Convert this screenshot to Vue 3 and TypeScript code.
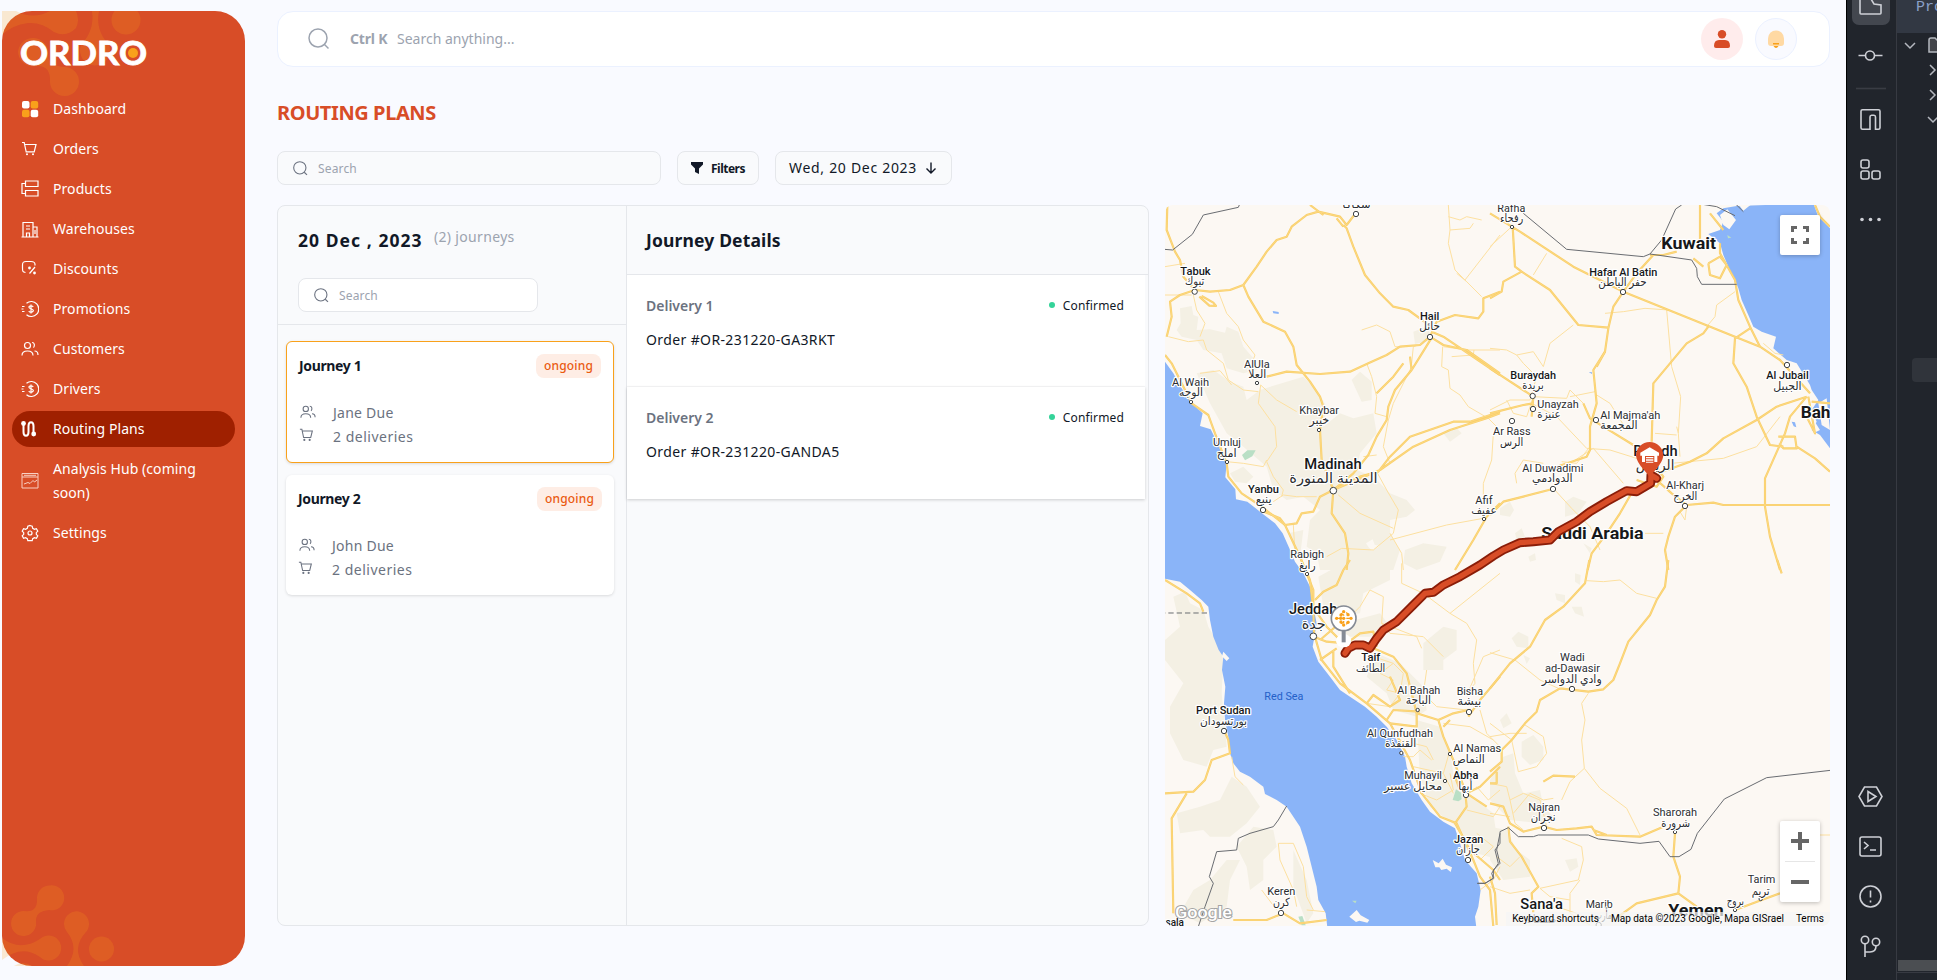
<script setup lang="ts">
interface NavItem { label: string; icon: string; active?: boolean }
interface Label { t: string; x: number; w: number; y: number; s: number; b?: boolean; c?: string }
interface Tile {
  x: number; y: number
  terrain: string[]; water: string[]; land: string[]; park: string[]
  minor: string[]; major: string[]; border: string[]
  labels: Label[]; towns: [number, number, number][]
}

const nav: NavItem[] = [
  { label: 'Dashboard', icon: 'dash' },
  { label: 'Orders', icon: 'cart' },
  { label: 'Products', icon: 'products' },
  { label: 'Warehouses', icon: 'warehouse' },
  { label: 'Discounts', icon: 'discount' },
  { label: 'Promotions', icon: 'coin' },
  { label: 'Customers', icon: 'users' },
  { label: 'Drivers', icon: 'coin' },
  { label: 'Routing Plans', icon: 'route', active: true },
  { label: 'Analysis Hub (coming soon)', icon: 'chart' },
  { label: 'Settings', icon: 'gear' },
]

const icons: Record<string, string> = {
  cart: 'M1 2.5h2.2l2 9.3h8l1.8-7.3H4',
  products: 'M4.5 1h12.5v5.5h-12.5zM4.5 10.500h12.5v5.5h-12.5zM4.5 3.500H1v10h3.500',
  warehouse: 'M2 17V2.500h10V17M12 7h4v10M.5 17h17M5 6h4M5 9h4M5.500 17v-4h3v4M14 10v4',
  discount: 'M4.500 12.500C1.500 12 1.500 11 1.500 8V5C1.500 2 2.500 1.500 5 1.500h5c2.500 0 4 .5 4 3v1M14 7l-5.500 6.500',
  coin: 'M5.500 3.200A7.500 7.500 0 1 1 5.500 14.800M1 6.500h2.500M.5 9h2M1 11.500h2.500M12.200 7C11.500 5.300 7.700 5.400 8 7.400c.3 1.700 4 1 4.300 3 .2 2-3.600 2.300-4.500.5M10 4.500v9',
  users: 'M6.500 8.500a3 3 0 1 0 0-6 3 3 0 0 0 0 6zM1 15.500c0-3 1.500-4.500 5.500-4.500s5.500 1.500 5.500 4.500M11 2.500c2.700 0 3 3.500 1.500 5.200M13.500 11c2.300 0 3.500 1.500 3.500 4',
  route: 'M2.500 4v8c0 5 5 5 5 0V6c0-5 5-5 5 0v7',
  chart: 'M1 1.500h16v14.500H1zM1 5h16M3 3.300h12M3 12l4-1.500 2 1 3-3 1.500 1.500L16 8',
  gear: 'M9 1.500l2.200.8.5 2 1.700 1 2-.6 1.400 2.500-1.500 1.500v1.600l1.500 1.500-1.400 2.500-2-.6-1.700 1-.5 2H6.800l-.5-2-1.700-1-2 .6-1.400-2.500 1.500-1.500V8.700L1.200 7.200l1.400-2.500 2 .6 1.700-1 .5-2zM9 11a2 2 0 1 0 0-4 2 2 0 0 0 0 4z',
}

const journeys = [
  { name: 'Journey 1', status: 'ongoing', driver: 'Jane Due', count: '2 deliveries', selected: true },
  { name: 'Journey 2', status: 'ongoing', driver: 'John Due', count: '2 deliveries', selected: false },
]
const deliveries = [
  { name: 'Delivery 1', order: 'Order #OR-231220-GA3RKT', status: 'Confirmed' },
  { name: 'Delivery 2', order: 'Order #OR-231220-GANDA5', status: 'Confirmed' },
]

/* Each tile is drawn at three times its on-screen size. */
const tiles: Tile[] = [
  {
    x: 1160, y: 200,
    terrain: [
      'M60 325L95 318 100 345 115 350 110 390 150 388 195 398 200 380 235 395 250 440 285 480 290 510 250 520 200 505 185 460 130 450 110 420 65 410 50 390 62 370z',
      'M110 520L160 510 210 545 250 560 260 600 300 570 380 545 430 530 470 570 500 620 490 680 540 640 580 655 640 640 650 700 600 760 590 810 640 830 690 880 740 900 765 930 740 950 690 960 690 1000 720 1050 700 1110 480 1110 470 1060 440 1040 450 960 480 930 430 890 380 900 340 870 320 800 250 740 200 700 150 610z',
      'M575 540L600 515 635 545 635 600 605 605zM760 395L800 380 820 420 765 432zM735 1050L790 1030 860 1040 840 1085 770 1110 730 1090zM850 700L890 685 905 700 870 725z',
      'M210 820L250 800 280 830 260 850 225 845zM385 1000L430 990 420 1070 400 1040z',
    ],
    water: [
      'M0 475L15 485 40 520 62 560 95 610 128 640 120 678 152 688 168 720 182 752 200 790 196 832 226 868 228 898 262 905 300 935 345 970 368 1000 388 1045 405 1085 430 1120 450 1160 462 1230 470 1270 458 1340 475 1385 510 1430 540 1470 570 1490 615 1520 650 1550 680 1580 710 1620 735 1670 740 1700 755 1750 785 1800 810 1835 850 1865 885 1885 900 1930 915 1980 950 2020 962 2070 955 2120 945 2150 950 2190 503 2190 497 2140 475 2100 470 2060 455 2000 440 1940 420 1880 380 1820 350 1800 315 1782 310 1760 270 1730 240 1715 220 1690 210 1660 205 1610 195 1560 192 1510 196 1460 186 1410 190 1370 176 1350 160 1310 150 1260 145 1220 125 1200 90 1170 60 1145 0 1133z',
      'M338 333l18 3v6l-16-2z',
    ],
    land: ['M618 1030l20-12 6 16 14 4-22 14-10-10z'],
    park: ['M246 765l16-14 25 0-10 18-22 12z'],
    minor: [
      'M15 200L45 195 75 190M15 285H95M100 285L110 330 135 370 120 410M25 410L85 425 130 420 140 450 190 490 205 540 250 570 295 575M175 275L200 340 235 380 250 420 285 465 265 520',
      'M302 555L295 610 345 680 350 740 320 785 340 830 370 870 365 890M120 520L180 512 215 555M200 785L250 790 310 800M302 555L350 600 410 635M310 800L320 780',
      'M865 15L870 90 865 130 885 210 920 245 965 290M870 90L930 85 940 70M915 240L1020 105M865 50L900 60 920 50 965 60',
      'M605 390L650 375 690 395 705 440 725 440M850 440L920 450H1020M848 440L845 500 865 510 870 565 900 585 925 620 985 655 1020 690M875 470L940 465 942 450M1000 700L995 780 970 850 970 890',
      'M620 490L635 530 650 590 645 640 680 650M755 490L760 440 790 430M755 500L700 610 685 660 670 740 690 790M650 815L680 870 715 930 700 1000 640 1050 545 1045 500 1070M690 1000L725 1060 730 1110M690 1020L860 975 970 955M535 885L600 940 700 985M610 770L650 765',
      'M340 905L370 885 410 890 470 890M400 975L405 1060M890 220L920 245',
    ],
    major: [
      'M22 15L20 90 45 155 60 180 70 230 105 270 60 285 30 305 35 350 20 410M105 270L150 275 210 270 250 255 290 200 320 155 350 120 380 110 395 80 440 45 475 35 540 50 560 75 585 42M450 15L490 45M250 255L265 290 310 365 375 395 400 440 410 495 450 545 480 590 490 620 480 690 485 780 520 870',
      'M118 290L148 317 168 318 160 308 125 288M550 75L560 85 580 140 615 225 660 280 700 320 745 330 800 370M530 55L550 80M810 410L830 365 885 345 955 355 970 335 970 295 1020 275M810 410L780 435 720 440 680 465 625 490 570 515 480 522 380 515 320 530M810 410L850 435 920 450 1020 520M815 395L850 410 1020 525',
      'M812 418L780 470 755 510 705 570 685 620 680 660 650 710 625 765 580 820 520 870M755 510L750 470M730 490L700 530 650 580M520 870L600 830 655 815 690 770 750 710 880 665 930 665 1020 635M520 870L660 810 760 740 870 690 980 655 1020 640M520 870L480 890 460 935 425 940 410 970 375 975 360 955 300 930',
      'M520 870L515 940 555 1000 565 1060 560 1110M15 465L35 490 60 540 95 610 145 645 165 700 200 790 205 830 245 880 305 920 375 975 420 1070 460 1170 460 1230M1020 910L980 950 940 1020 885 1110',
    ],
    border: ['M0 147L38 150 97 103 130 45 235 22 240 10'],
    labels: [
      { t: 'سكاكا', x: 547, w: 85, y: 24, s: 34 },
      { t: 'Tabuk', x: 61, w: 91, y: 224, s: 31, b: true }, { t: 'تبوك', x: 75, w: 58, y: 255, s: 34 },
      { t: 'Hail', x: 780, w: 58, y: 360, s: 31, b: true }, { t: 'حائل', x: 778, w: 62, y: 390, s: 34 },
      { t: 'AlUla', x: 252, w: 77, y: 503, s: 31 }, { t: 'العلا', x: 265, w: 54, y: 534, s: 34 },
      { t: 'Al Wajh', x: 36, w: 111, y: 557, s: 31 }, { t: 'الوجه', x: 57, w: 72, y: 588, s: 34 },
      { t: 'Khaybar', x: 418, w: 119, y: 641, s: 31 }, { t: 'خيبر', x: 448, w: 60, y: 672, s: 34 },
      { t: 'Umluj', x: 159, w: 84, y: 737, s: 31 }, { t: 'املج', x: 170, w: 60, y: 770, s: 34 },
      { t: 'Madinah', x: 433, w: 172, y: 808, s: 44, b: true }, { t: 'المدينة المنورة', x: 388, w: 265, y: 850, s: 43 },
      { t: 'Yanbu', x: 264, w: 93, y: 878, s: 31, b: true }, { t: 'ينبع', x: 287, w: 48, y: 910, s: 34 },
      { t: 'Afif', x: 946, w: 52, y: 911, s: 31 }, { t: 'عفيف', x: 934, w: 76, y: 942, s: 34 },
      { t: 'Rabigh', x: 391, w: 101, y: 1073, s: 31 },
    ],
    towns: [[588, 42, 8], [104, 275, 8], [810, 411, 8], [291, 549, 5], [93, 606, 5], [477, 690, 5], [201, 786, 5], [520, 872, 10], [309, 930, 8], [972, 957, 5]],
  },
  {
    x: 1490, y: 200,
    terrain: ['M30 925L60 905 72 930 60 950 30 945zM225 905L250 890 290 905 265 940 225 950zM75 1000L95 985 105 1010 80 1018zM280 1030L305 1045 300 1060zM115 1070L135 1060 138 1080 120 1085z'],
    water: [
      'M680 40L700 25 740 18 970 10 985 50 1020 85V745L990 705 965 690 980 665 965 630 985 600 965 570 960 555 945 530 920 490 890 480 850 445 858 410 815 395 790 380 775 345 755 300 745 265 735 240 715 200 700 165 690 130 655 102 690 90 700 65z',
      'M905 665l10 2 4 15-8-3zM296 516l10 1 0 5z',
    ],
    land: ['M690 45L712 28 738 60 718 88 700 75zM985 610L1010 595 1020 690 995 675zM965 650L990 690 970 700z', 'M735 0L800 0 760 32z'],
    park: ['M712 105l12 8-10 2z'],
    minor: [
      'M0 140L65 80M170 160L130 225M0 445L50 450 80 465 130 455 160 500 180 430 250 375M345 340L400 335 465 325 535 330M530 330L545 500 572 590 565 700 570 770M735 275L680 315 675 350 650 380M820 430L855 460 880 465',
      'M0 630L60 600 120 600 140 530 100 490 80 465M130 590L110 650 70 640 50 600M130 590L230 595 240 570 280 610M240 590L315 575M300 740L260 790 215 785M495 700L560 705M125 610L200 650 290 745 360 750 440 775M80 850L75 820 100 780 160 790M190 865L245 925 300 980 330 1050M545 790L700 775 800 740 870 650M590 920L585 960 570 935M465 1000H520',
      'M240 790L310 745 400 850M320 585L360 610 410 690M565 700L560 680',
    ],
    major: [
      'M0 40L90 95 250 200 400 275 560 340 735 410 810 440 870 480 960 580M68 80L75 200 95 215 40 245 35 275 0 295M95 215L180 270 265 375 355 383M490 165L440 220 400 275 370 320 355 385 345 455 310 510 320 610 300 680 300 750 290 770 200 800',
      'M345 455L320 500M485 725L490 550 540 490 590 430 640 400 655 380M630 15V120M660 40L700 90M690 130L690 160 735 240 745 300 780 380 810 440M655 190L660 225 690 235 710 195 690 170 655 190M610 175L640 200M780 385L735 415 730 490 770 560 800 650 840 735 880 740',
      'M480 165H520L560 155M0 505L130 590 125 650M0 640L100 615 130 610M280 610L300 655 340 680 430 735 490 770M490 825L600 785 650 760 700 715 800 660 860 620 950 590M950 590L900 650 885 700 865 745 825 835 825 920 840 1010 870 1110M865 710L915 710 920 745 880 745 868 730M920 740L975 775 1020 815M955 590L975 700 950 650',
      'M500 840L545 880 590 915 670 908 700 915H1020M585 920L555 950 535 1010 525 1050 535 1110M430 870L390 940 350 1000 305 1060 293 1110M188 867L100 890 40 905 0 945M440 840L500 860 520 830 490 790M975 15L990 50 1020 80M965 605L1020 610',
    ],
    border: ['M100 40L230 148 460 170 480 162 605 180 620 205 622 230 635 253H740', 'M480 162L515 120 557 27 575 15', 'M632 12L680 20 735 47M735 10L760 35'],
    labels: [
      { t: 'Rafha', x: 22, w: 84, y: 35, s: 31 }, { t: 'رفحاء', x: 30, w: 70, y: 67, s: 34 },
      { t: 'Kuwait', x: 514, w: 164, y: 148, s: 52, b: true },
      { t: 'Hafar Al Batin', x: 298, w: 204, y: 227, s: 31, b: true }, { t: 'حفر الباطن', x: 325, w: 145, y: 258, s: 34 },
      { t: 'Buraydah', x: 61, w: 137, y: 536, s: 31, b: true }, { t: 'بريدة', x: 97, w: 64, y: 568, s: 34 },
      { t: 'Unayzah', x: 142, w: 124, y: 623, s: 31 }, { t: 'عنيزة', x: 142, w: 70, y: 655, s: 34 },
      { t: 'Al Jubail', x: 829, w: 127, y: 536, s: 31, b: true }, { t: 'الجبيل', x: 850, w: 85, y: 570, s: 34 },
      { t: "Al Majma'ah", x: 331, w: 180, y: 656, s: 31 }, { t: 'المجمعة', x: 331, w: 112, y: 688, s: 34 },
      { t: 'Bahrain', x: 932, w: 178, y: 654, s: 50, b: true },
      { t: 'Ar Rass', x: 9, w: 113, y: 704, s: 31 }, { t: 'الرس', x: 30, w: 70, y: 738, s: 34 },
      { t: 'Riyadh', x: 430, w: 133, y: 768, s: 44, b: true }, { t: 'الرياض', x: 437, w: 116, y: 810, s: 43 },
      { t: 'Al Duwadimi', x: 97, w: 183, y: 815, s: 31 }, { t: 'الدوادمي', x: 126, w: 122, y: 847, s: 34 },
      { t: 'Al-Kharj', x: 529, w: 113, y: 868, s: 31 }, { t: 'الخرج', x: 550, w: 72, y: 901, s: 34 },
      { t: 'Saudi Arabia', x: 154, w: 307, y: 1018, s: 52, b: true },
    ],
    towns: [[66, 81, 5], [399, 276, 8], [128, 588, 8], [129, 627, 8], [66, 663, 8], [318, 660, 8], [891, 495, 8], [189, 867, 8], [585, 918, 8]],
  },
  {
    x: 1160, y: 560,
    terrain: [
      'M40 110L75 95 90 130 130 150 145 200 180 260 190 300 185 400 195 500 200 560 160 570 140 620 70 600 30 520 30 440 70 370 15 300 15 240 60 200z',
      'M50 760L120 740 180 720 215 650 260 680 300 740 260 790 210 830 150 830 130 810 60 820zM230 860L280 800 340 810 350 860 310 900 310 960 270 990 260 920zM150 960L200 900 240 900 210 960 200 1040 120 1090 60 1060 100 990zM400 870L440 960 460 1060 440 1090 400 980z',
      'M475 50L550 10 600 0 690 0 690 60 610 100 600 160 520 170 490 140zM550 190L660 160 690 200 630 230 560 230zM650 280L720 310 790 380 800 450 770 470 700 450 680 400 620 350zM770 480L840 500 870 570 880 640 920 700 1000 760 1020 900 950 880 890 800 810 740 780 650z',
      'M790 250L850 200 890 210 890 270 850 300 850 330 790 330z',
    ],
    water: [],
    land: ['M818 900l18 10 12-14 10 18 18 8-4 14-12-10-16 4-6-8-12 0zM568 1070l22-20 12 16 26 14-6 8-24-6-10 4zM190 275l18 20-8 8-14-14z'],
    park: ['M878 720l10-32 15 10 2 20-10 6zM415 1070l12-2 10 28-12 0zM576 1022l14 0-4 8z'],
    minor: [
      'M725 10V70L790 100 870 160 1020 40M870 160L920 190 950 240 940 310 945 370 925 395M600 140L630 90 670 110 665 190 770 230M600 140L560 180M665 190L690 220 790 230 850 290M770 230L785 265',
      'M640 290L700 310 660 340 700 360 680 390 720 400 690 440 620 430M700 310L730 340 720 400M850 490L930 500 1000 540M960 450L980 520 1020 560M690 490L720 540 800 560 820 600M730 590L760 590 780 570 815 600M925 395L970 290 1020 270',
      'M355 850L360 900 400 990 410 1040M355 850L400 850 430 920 440 1010 460 1050M305 990L350 1050M215 590L225 650 250 675M440 1050L495 1055M950 820L1000 860 960 900M960 990L1000 960 1020 920M950 680L985 720 1020 690M780 700L830 720 880 690 870 640M920 750L1000 770 1020 740',
      'M800 330L790 400 830 440 920 450M870 570L850 640 880 700M760 620L850 640',
    ],
    major: [
      'M15 60L80 100 120 130 130 155M192 510L205 540 210 580 155 600 135 660 100 695 15 700M80 700L35 775 40 1060M415 -20L450 60 460 150 462 220 485 300 540 370 620 430 690 490 750 600 785 700 840 770 890 790 940 900 960 950 990 990 1000 1100',
      'M465 120L490 95 530 75 550 30 570 0M465 150L500 200 540 240 640 265 700 290 740 340 770 460 835 480 850 530 880 600 915 690 920 740 885 790 930 870M462 230L500 245 560 250 600 220 640 215 650 260M480 300L530 265M520 270L520 320 570 400M480 240L550 180',
      'M620 430L640 405 690 440 720 420 690 350M680 480L700 450 780 455M770 460L770 500 690 490M835 480L880 460 925 450M925 470L960 420 1020 350M885 650L900 690M920 700L960 680 1020 620M920 700L980 740M930 870L1000 930 1020 960M850 500L870 480M220 1080L320 1080 370 1060 420 1090 500 1080',
    ],
    border: ['M380 738L355 780 340 800 270 820 235 835 230 870 170 875 148 950 160 970 135 1040 115 1100', 'M1020 820L1010 870 1020 910 1000 930 1000 955 975 970H952'],
    labels: [
      { t: 'رابغ', x: 417, w: 50, y: 27, s: 34 },
      { t: 'Jeddah', x: 387, w: 145, y: 163, s: 44, b: true }, { t: 'جدة', x: 425, w: 72, y: 206, s: 43 },
      { t: 'Taif', x: 604, w: 57, y: 304, s: 31, b: true }, { t: 'الطائف', x: 588, w: 88, y: 336, s: 34 },
      { t: 'Al Bahah', x: 712, w: 129, y: 401, s: 31 }, { t: 'الباحة', x: 737, w: 76, y: 433, s: 34 },
      { t: 'Bisha', x: 890, w: 79, y: 404, s: 31 }, { t: 'بيشة', x: 892, w: 72, y: 435, s: 34 },
      { t: 'Red Sea', x: 313, w: 117, y: 421, s: 31, c: '#2c68d0' },
      { t: 'Port Sudan', x: 108, w: 164, y: 461, s: 31, b: true }, { t: 'بورتسودان', x: 120, w: 141, y: 494, s: 34 },
      { t: 'Al Qunfudhah', x: 621, w: 198, y: 530, s: 31 }, { t: 'القنفذة', x: 675, w: 94, y: 562, s: 34 },
      { t: 'Al Namas', x: 880, w: 144, y: 575, s: 31 }, { t: 'النماص', x: 878, w: 96, y: 608, s: 34 },
      { t: 'Muhayil', x: 733, w: 113, y: 656, s: 31 }, { t: 'محايل عسير', x: 672, w: 174, y: 690, s: 34 },
      { t: 'Abha', x: 879, w: 76, y: 656, s: 31, b: true }, { t: 'أبها', x: 895, w: 42, y: 690, s: 34 },
      { t: 'Jazan', x: 882, w: 88, y: 848, s: 31, b: true }, { t: 'جازان', x: 888, w: 72, y: 880, s: 34 },
      { t: 'Keren', x: 322, w: 84, y: 1006, s: 31 }, { t: 'كرن', x: 339, w: 50, y: 1038, s: 34 },
      { t: 'Kassala', x: -34, w: 106, y: 1097, s: 31, b: true },
    ],
    towns: [[441, 42, 5], [460, 229, 10], [773, 450, 5], [927, 456, 8], [192, 513, 8], [724, 579, 5], [870, 582, 5], [855, 663, 5], [918, 705, 8], [924, 900, 8], [363, 1059, 8]],
  },
  {
    x: 1490, y: 560,
    terrain: [
      'M65 235L85 215 115 230 115 265 80 260zM245 140L275 140 282 170 255 160zM195 100L225 105 225 130 200 120zM255 40L272 45 270 75 255 65zM100 285L120 295 110 312zM30 480L50 460 65 490 40 505z',
      'M95 545L130 525 160 560 160 600 120 615 95 590zM40 590L70 580 75 640 100 700 150 690 160 740 200 780 150 790 60 780 0 720 0 660zM0 800L50 810 80 870 120 900 120 950 40 960 0 900zM225 900L260 895 265 920 240 935z',
    ],
    water: [], land: [], park: [],
    minor: [
      'M290 62L340 65 390 60 440 100 500 115M0 278L75 300 150 360 205 385M295 400L275 430 285 480 275 540 283 625 240 665 215 720M283 625L330 685 410 745 450 825M105 495L160 530 170 580 140 620 85 635 65 540 0 490M0 530L60 520 110 520',
      'M0 670L50 680 60 720 100 700 150 720 170 800M215 835L275 860 280 900 265 960 150 985M0 980L60 1000 120 990M60 720L75 790 100 810M90 890L60 920 20 890M270 960L240 1000 240 1060 300 1095M150 985L180 1010 240 1020M990 825H1020',
      'M70 760L120 700 160 720 190 715M0 760L60 770M130 1050L200 1040 260 1060',
    ],
    major: [
      'M298 0L285 70 220 140 165 180 120 260 60 310 0 385M535 0L525 80 500 120 480 165 415 245 390 310 370 360 340 388 295 395 210 385 150 420 140 455 105 490 65 540 35 570 35 605 0 635M862 0L875 40M20 635V670L0 670',
      'M0 730L40 740 60 790 100 815 160 800 200 810 260 805 305 800 320 825 450 830 520 800M310 810L350 825M555 820L550 890 570 950 565 1000 440 1030 385 1070M565 1000L620 1040M255 650L190 647 160 665M55 800L60 845 95 890 145 980 125 1000 130 1060M0 950L15 1000 20 1095M735 1050L815 1020 870 1000',
    ],
    border: ['M-38 970H-15L10 955 5 940 25 910 15 870 30 850 30 815 55 803 85 830H130L145 825H295L325 837 450 850 507 844 540 890H567L603 868 622 820 703 717 830 653 1030 630'],
    labels: [
      { t: 'Wadi', x: 210, w: 74, y: 302, s: 31 }, { t: 'ad-Dawasir', x: 165, w: 165, y: 335, s: 31 }, { t: 'وادي الدواسر', x: 155, w: 180, y: 368, s: 34 },
      { t: 'Najran', x: 115, w: 95, y: 752, s: 31 }, { t: 'نجران', x: 122, w: 75, y: 784, s: 34 },
      { t: 'Sharorah', x: 489, w: 132, y: 767, s: 31 }, { t: 'شرورة', x: 514, w: 86, y: 800, s: 34 },
      { t: 'Tarim', x: 773, w: 83, y: 970, s: 31 }, { t: 'تريم', x: 785, w: 54, y: 1004, s: 34 },
      { t: 'بروج', x: 710, w: 52, y: 1036, s: 34 },
      { t: "Sana'a", x: 91, w: 128, y: 1047, s: 44, b: true }, { t: 'Marib', x: 287, w: 81, y: 1045, s: 31 }, { t: 'صنعاء', x: 110, w: 90, y: 1088, s: 34 }, { t: 'مأرب', x: 315, w: 50, y: 1078, s: 34 },
      { t: 'Yemen', x: 535, w: 166, y: 1067, s: 52, b: true },
    ],
    towns: [[246, 387, 8], [162, 804, 8], [555, 816, 5], [812, 1017, 5], [735, 1050, 5], [326, 1095, 8]],
  },
]
const route = 'M1490 835L1473 825 1472 850 1430 875 1400 872 1340 905 1290 935 1250 965 1195 995 1170 1020 1120 1025 1080 1028 1030 1050 1000 1068 960 1095 900 1130 850 1155 820 1177 795 1180 760 1215 710 1265 670 1290 650 1315 630 1345 610 1335 585 1335 565 1345 555 1360'
const fills = ['terrain', 'water', 'land', 'park'] as const
const lines = ['minor', 'major', 'border'] as const
const place = (t: Tile) => `translate(${t.x} ${t.y}) scale(.33333)`
</script>

<template>
  <div class="screen">
    <aside class="sidebar">
      <svg class="deco" width="243" height="955" viewBox="2 11 243 955">
        <path d="M2 11H16Q33 20 50 11H76Q80 20 76 28Q66 38 54 32Q42 22 28 23Q12 25 2 35z" />
        <path d="M92 11Q95 30 81 45A15 15 0 1 0 109 45Q95 30 99 11zM18 52A15 15 0 1 1 48 54Q48 66 64 67A14.500 14.500 0 1 1 50 82Q51 65 36 66A15 15 0 0 1 18 52z" />
        <circle cx="126" cy="20" r="14.500" />
        <path d="M49.500 885.500A12.500 12.500 0 1 1 49 910Q35 911 36 922A12.500 12.500 0 1 1 24 911Q38 913 37 898A12.500 12.500 0 0 1 49.500 885.500z" />
        <path d="M64 924A12.500 12.500 0 1 1 86 932Q71 948 84 966H67Q80 948 67 932A12.500 12.500 0 0 1 64 924zM2 938Q20 952 40 939A12.500 12.500 0 1 1 40 957Q22 944 2 960zM14 966Q23 960 32 966z" />
        <circle cx="101.500" cy="949" r="12.500" />
      </svg>
      <svg class="logo" width="136" height="40" viewBox="-3 -5 136 40">
        <text x="0" y="26.500" textLength="127" lengthAdjust="spacingAndGlyphs">ORDRO</text>
        <circle cx="113" cy="15" r="5" />
      </svg>
      <nav>
        <a v-for="n in nav" :key="n.label" class="item" :class="{ active: n.active }">
          <svg class="nico" width="18" height="18" viewBox="0 0 18 18">
            <template v-if="n.icon === 'dash'">
              <rect class="w" x="1" y="1" width="7.500" height="7.500" rx="2" /><rect class="o" x="9.700" y="1" width="7.500" height="7.500" rx="2" />
              <rect class="o" x="1" y="9.700" width="7.500" height="7.500" rx="2" /><rect class="w" x="9.700" y="9.700" width="7.500" height="7.500" rx="2" />
            </template>
            <path v-else class="ln" :class="n.icon" :d="icons[n.icon]" />
            <template v-if="n.icon === 'cart'"><circle class="w" cx="6" cy="14.300" r="1" /><circle class="w" cx="12" cy="14.300" r="1" /></template>
            <template v-if="n.icon === 'discount'"><circle class="w" cx="8.500" cy="8" r="1.400" /><circle class="w" cx="13.500" cy="13" r="1.400" /></template>
            <template v-if="n.icon === 'route'"><circle class="w" cx="2.500" cy="3.500" r="2.400" /><circle class="w" cx="12.700" cy="14" r="2.400" /></template>
          </svg>
          <span>{{ n.label }}</span>
        </a>
      </nav>
    </aside>

    <main>
      <header class="topbar">
        <svg class="mag" width="22" height="22" viewBox="0 0 22 22"><circle cx="10" cy="10" r="9" /><path d="M16.500 16.500L20.500 20.500" /></svg>
        <b>Ctrl K</b><span class="ph">Search anything...</span>
        <div class="round user"><svg width="18" height="18" viewBox="0 0 18 18"><circle cx="9" cy="4.200" r="4.200" /><path d="M1 16q0-6 5-6h6q5 0 5 6 0 2-2 2H3q-2 0-2-2z" /></svg></div>
        <div class="round bell"><svg width="18" height="18" viewBox="0 0 18 18"><path class="light" d="M1 8.500a8 8 0 0 1 16 0V13q0 3-3 3H4q-3 0-3-3z" /><path class="dark" d="M6 13h6v1.400H6zM6.500 16h5q-2.500 4-5 0z" /></svg></div>
      </header>
      <h1>ROUTING PLANS</h1>
      <div class="filters">
        <div class="field wide"><svg class="mag sm" width="15" height="15" viewBox="0 0 22 22"><circle cx="10" cy="10" r="9" /><path d="M16.500 16.500L20.500 20.500" /></svg>Search</div>
        <button class="btn f"><svg width="12" height="12" viewBox="0 0 12 12"><path d="M0 0h12v2.500L8 6.500V12L4 10V6.500L0 2.500z" /></svg>Filters</button>
        <button class="btn d">Wed, 20 Dec 2023<svg width="12" height="12" viewBox="0 0 12 12"><path d="M6 .5v10.500M1.500 6.500L6 11l4.500-4.500" /></svg></button>
      </div>
      <div class="content">
        <section class="panel">
          <div class="jcol">
            <div class="jhead">
              <div class="jtitle"><h2>20 Dec , 2023</h2><span>(2) journeys</span></div>
              <div class="field white"><svg class="mag sm" width="15" height="15" viewBox="0 0 22 22"><circle cx="10" cy="10" r="9" /><path d="M16.500 16.500L20.500 20.500" /></svg>Search</div>
            </div>
            <article v-for="j in journeys" :key="j.name" class="card" :class="{ sel: j.selected }">
              <div class="ctop"><h3>{{ j.name }}</h3><span class="badge">{{ j.status }}</span></div>
              <div class="crow"><svg width="16" height="16" viewBox="0 0 18 18"><path :d="icons.users" /></svg>{{ j.driver }}</div>
              <div class="crow wide-text"><svg width="16" height="16" viewBox="0 0 18 18"><path :d="icons.cart" /><circle cx="6" cy="14.500" r=".6" /><circle cx="12" cy="14.500" r=".6" /></svg>{{ j.count }}</div>
            </article>
          </div>
          <div class="dcol">
            <div class="dhead"><h2>Journey Details</h2></div>
            <article v-for="d in deliveries" :key="d.name" class="del">
              <div class="dtop"><h4>{{ d.name }}</h4><span class="state"><i></i>{{ d.status }}</span></div>
              <p>{{ d.order }}</p>
            </article>
          </div>
        </section>

        <section class="map">
          <svg width="665" height="721" viewBox="1165 205 665 721">
            <template v-for="k in fills" :key="k">
              <g v-for="t in tiles" :key="t.x + '-' + t.y" :transform="place(t)"><path v-for="d in t[k]" :key="d" :class="k" :d="d" /></g>
            </template>
            <template v-for="k in lines" :key="k">
              <g v-for="t in tiles" :key="t.x + '-' + t.y" :transform="place(t)">
                <path v-for="d in t[k]" :key="d" :class="k" :d="d" />
                <template v-if="k === 'major'"><path v-for="d in t[k]" :key="'c' + d" class="core" :d="d" /></template>
              </g>
            </template>
            <path class="border dash" transform="translate(1160 560) scale(.33333)" d="M0 159H148" />
            <g v-for="t in tiles" :key="'l' + t.x + '-' + t.y" :transform="place(t)">
              <circle v-for="(c, i) in t.towns" :key="i" class="town" :cx="c[0]" :cy="c[1]" :r="c[2]" />
              <text
                v-for="(l, i) in t.labels" :key="'t' + i" class="lbl" :class="{ bold: l.b, sea: l.c }" :x="l.x" :y="l.y"
                :font-size="l.s" :textLength="l.w" lengthAdjust="spacingAndGlyphs">{{ l.t }}</text>
            </g>
            <g transform="translate(1160 200) scale(.33333)">
              <path class="rout" :d="route" /><path class="rin" :d="route" />
              <g transform="translate(1428 724)">
                <path class="pin" d="M41 2A41 41 0 0 1 82 43Q80 62 58 86L41 106 24 86Q2 62 0 43A41 41 0 0 1 41 2z" />
                <path class="pw" d="M13 34L41 18 69 34V43H64V62H55V44H27V62H18V43H13zM30 47H52V51H30zM30 54H52V58H30zM30 61H52V64H30z" />
              </g>
              <g transform="translate(551 1255)">
                <ellipse class="base" cx="0" cy="67" rx="23" ry="20" /><path class="stem" d="M0 35V72" /><circle class="ball" r="37" />
                <path class="node" d="M-20 0H-8M8 0H22M0-8V-10L-8-15M0 8V12L-8 16M8-18L16-8M8 18L16 8" />
                <circle v-for="(p, i) in [[-21, 0], [0, -20], [-8, -10], [0, 20], [-8, 11], [13, -11], [13, 12], [22, 0], [0, 0], [-9, 0]]" :key="i" class="dot" :cx="p[0]" :cy="p[1]" r="5" />
              </g>
            </g>
            <text class="goog" x="1175" y="918" textLength="57" lengthAdjust="spacingAndGlyphs">Google</text>
          </svg>
          <div class="fs"><svg width="18" height="18" viewBox="0 0 18 18"><path d="M1.500 6V1.500H6M12 1.500h4.500V6M16.500 12v4.500H12M6 16.500H1.500V12" /></svg></div>
          <div class="zoom">
            <svg width="18" height="18" viewBox="0 0 18 18"><path d="M9 0v18M0 9h18" /></svg><hr>
            <svg width="18" height="18" viewBox="0 0 18 18"><path d="M0 9h18" /></svg>
          </div>
          <div class="attr"><span class="a1">Keyboard shortcuts</span><span class="a2">Map data ©2023 Google, Mapa GISrael</span><span class="a3">Terms</span></div>
        </section>
      </div>
    </main>

    <aside class="ide">
      <div class="rail">
        <div class="chip"></div>
        <svg width="49" height="980" viewBox="1847 0 49 980">
          <path d="M1860 0V13q0 1 1 1h19q1 0 1-1V5l-7-1-3-5" />
          <circle cx="1870" cy="55.500" r="4.500" /><path d="M1858.500 55.500h7M1874.500 55.500h8" />
          <path class="sep" d="M1856 88.500h30" />
          <path d="M1870 129.300h-7.500q-1.500 0-1.500-1.500v-16.500q0-1.500 1.500-1.500h16q1.500 0 1.500 1.500v16.500q0 1.500-1.500 1.500h-3V117q0-1.700-1.500-1.700h-2.500q-1.500 0-1.500 1.700z" />
          <rect x="1861" y="160" width="8" height="8" rx="2" /><rect x="1861" y="171" width="8" height="8" rx="2" /><rect x="1872" y="171" width="8" height="8" rx="2" />
          <g class="dots"><circle cx="1862" cy="219.500" r="1.800" /><circle cx="1870.500" cy="219.500" r="1.800" /><circle cx="1879" cy="219.500" r="1.800" /></g>
          <path d="M1864.500 787h12l5.500 9.500-5.500 9.500h-12l-5.500-9.500zM1868 791.500v10l8-5z" />
          <rect x="1860" y="837" width="21" height="19" rx="2" /><path d="M1864 842l4 3.500-4 3.500M1870 850h6" />
          <circle cx="1870.500" cy="896.500" r="10.500" /><path d="M1870.500 890.500v7M1870.500 900.500v2" />
          <circle cx="1865" cy="940" r="3.700" /><circle cx="1876" cy="942" r="3.700" /><path d="M1865 944v13M1865 952h5q6 0 6-6" />
        </svg>
      </div>
      <div class="tree">
        <div class="thead">Project</div>
        <svg width="40" height="100" viewBox="1897 33 40 100">
          <path d="M1905 43l5 5 5-5M1930 65l5 5-5 5M1930 90l5 5-5 5M1928 117l5 5 5-5" /><path class="fold" d="M1929 52V40q0-2 2-2h4l3 3v11z" />
        </svg>
        <div class="row"></div>
        <div class="bar"></div>
        <div class="foot"></div>
      </div>
    </aside>
  </div>
</template>

<style>
body { margin: 0; overflow: hidden; }
</style>

<style scoped>
* { box-sizing: border-box; }
.screen { width: 1937px; height: 980px; display: flex; background: #f9faff; font-family: "Noto Sans", "Open Sans", sans-serif; font-size: 14px; color: #111827; overflow: hidden; }
h1, h2, h3, h4, p { margin: 0; }
svg { display: block; flex: none; }
.sidebar { position: relative; width: 243px; height: 955px; margin: 11px 32px 0 2px; flex: none; border-radius: 30px; background: #d84d27; }
.deco { position: absolute; left: 0; top: 0; fill: #f9a11b; fill-opacity: .2; }
.logo { position: relative; margin: 22px 0 0 15px; fill: #fff; overflow: visible; }
.logo text { font: 700 32px Lato, sans-serif; stroke: #fff; stroke-width: .8; }
.logo circle { fill: #f9a11b; }
.sidebar { display: flex; flex-direction: column; }
nav { position: relative; display: flex; flex-direction: column; gap: 4px; padding: 18px 10px 0; }
.item { display: flex; align-items: center; min-height: 36px; padding: 6px 9px; gap: 14px; border-radius: 18px; color: #fff; line-height: 24px; font-size: 14px; letter-spacing: .07px; }
.item.active { background: #9f2000; }
.item span { width: 160px; }
.ln { fill: none; stroke: #fff; stroke-width: 1.200; }
.ln.route { stroke-width: 2; }
.ln.chart { stroke: #f9cfc2; stroke-width: 1; }
.w { fill: #fff; } .o { fill: #f9a11b; }
main { width: 1553px; flex: none; padding-top: 11px; }
.topbar { display: flex; align-items: center; height: 56px; border: 1px solid #ebf1ff; border-radius: 16px; background: #fff; padding: 0 32px 0 30px; color: #9ca3af; }
.topbar b { margin-left: 20px; font-weight: 700; width: 47px; letter-spacing: -.2px; padding-bottom: 2px; }
.ph { flex: 1; letter-spacing: 0; padding-bottom: 2px; }
.mag { fill: none; stroke: #9ca3af; stroke-width: 1.500; }
.mag.sm { stroke: #6b7280; stroke-width: 1.600; }
.round { width: 42px; height: 42px; border-radius: 50%; display: grid; place-items: center; margin-left: 12px; }
.user { background: #ffecec; fill: #d84d27; }
.bell { background: #f9faff; border: 1px solid #ebf1ff; }
.light { fill: #ffd9a3; } .dark { fill: #f9a11b; }
h1 { margin-top: 31px; height: 30px; line-height: 30px; font-size: 20px; font-weight: 700; color: #d84d27; letter-spacing: -.4px; }
.filters { display: flex; gap: 16px; margin-top: 23px; height: 34px; }
.field { display: flex; align-items: center; gap: 10px; height: 34px; border: 1px solid #e5e7eb; border-radius: 8px; background: #f9fafc; padding-left: 15px; font-size: 12px; letter-spacing: .15px; color: #9ca3af; }
.wide { width: 384px; }
.field.white { width: 240px; background: #fff; }
.btn { display: flex; align-items: center; height: 34px; border: 1px solid #e5e7eb; border-radius: 8px; background: #f9fafc; color: #111827; font-family: inherit; }
.f { width: 82px; padding: 0 0 0 13px; gap: 8px; font-size: 12px; font-weight: 700; letter-spacing: -.5px; }
.f svg { fill: #111827; }
.d { width: 177px; padding: 0 14px 2px 13px; justify-content: space-between; font-size: 14px; letter-spacing: .7px; white-space: nowrap; }
.d svg { fill: none; stroke: #111827; stroke-width: 1.400; margin-top: 2px; }
.content { display: flex; gap: 16px; margin-top: 20px; height: 721px; }
.panel { width: 872px; display: flex; border: 1px solid #e5e7eb; border-radius: 8px; background: #f9fafc; overflow: hidden; }
.jcol { width: 349px; border-right: 1px solid #e5e7eb; }
.jhead { height: 119px; padding: 20px 0 0 20px; border-bottom: 1px solid #e5e7eb; margin-bottom: 16px; }
.jtitle { display: flex; height: 52px; }
h2 { font-size: 17.500px; line-height: 28px; font-weight: 700; white-space: nowrap; letter-spacing: .15px; }
.jtitle h2 { width: 125px; letter-spacing: 1.050px; }
.jtitle span { margin-left: 11px; line-height: 22px; color: #9ca3af; letter-spacing: .33px; }
.card { width: 328px; height: 120px; margin: 0 0 12px 8px; padding: 12px 12px 0; border-radius: 6px; background: #fff; box-shadow: 0 1px 3px rgba(0,0,0,.13); }
.card.sel { height: 122px; border: 1px solid #f9a11b; }
.ctop { display: flex; justify-content: space-between; height: 46px; }
h3 { font-size: 14px; line-height: 24px; font-weight: 700; letter-spacing: -.35px; }
.badge { height: 24px; width: 65px; text-align: center; line-height: 23px; border-radius: 8px; background: #feede5; color: #ea5a10; font-size: 12px; font-weight: 500; letter-spacing: .2px; }
.crow { display: flex; align-items: center; gap: 17px; height: 24px; color: #6b7280; letter-spacing: .25px; }
.crow svg { fill: none; stroke: #6b7280; stroke-width: 1.200; margin-left: 1px; }
.crow.wide-text { letter-spacing: .5px; }
.crow + .crow svg { margin: -3px 1px 0 0; }
.dcol { flex: 1; }
.dhead { height: 69px; padding: 20px 19px; border-bottom: 1px solid #e5e7eb; }
.del { width: 518px; height: 112px; background: #fff; padding: 19px 21px 0 19px; border-bottom: 1px solid #f7f7f8; }
.del:last-child { border: 0; box-shadow: 0 1px 3px rgba(0,0,0,.18); }
.dtop { display: flex; justify-content: space-between; }
h4 { font-size: 14px; line-height: 24px; font-weight: 600; color: #6b7280; }
.state { display: flex; align-items: center; gap: 8px; height: 22px; font-size: 12px; letter-spacing: .15px; }
.state i { width: 6px; height: 6px; border-radius: 50%; background: #34d399; }
.del p { margin-top: 10px; line-height: 24px; letter-spacing: .38px; }
.map { position: relative; width: 665px; height: 721px; border-radius: 8px; overflow: hidden; background: #fcf8f3; }
.terrain { fill: #f4f0e4; } .water { fill: #8ab4f8; } .land { fill: #fcf8f3; } .park { fill: #b9dfc5; }
.minor { fill: none; stroke: #fde0a0; stroke-width: 3; stroke-linejoin: round; }
.major { fill: none; stroke: #f9cf6b; stroke-width: 6.500; stroke-linejoin: round; }
.core { fill: none; stroke: #fddc8a; stroke-width: 2; stroke-linejoin: round; }
.border { fill: none; stroke: #686b70; stroke-width: 3; }
.dash { stroke-dasharray: 16 9; }
.town { fill: #fff; stroke: #3c4043; stroke-width: 3; }
.lbl { font-family: Roboto, "DejaVu Sans", sans-serif; fill: #2b2d30; stroke: #fff; stroke-width: 7; stroke-linejoin: round; paint-order: stroke; }
.lbl.bold { font-weight: 500; fill: #16181a; }
.lbl.bold[font-size="52"], .lbl.bold[font-size="50"] { font-weight: 700; }
.lbl.sea { fill: #2460c8; stroke: none; }
.rout { fill: none; stroke: #8a1d08; stroke-width: 27; stroke-linejoin: round; stroke-linecap: round; }
.rin { fill: none; stroke: #d84d27; stroke-width: 16; stroke-linejoin: round; stroke-linecap: round; }
.pin { fill: #d84d27; } .pw { fill: #fff; fill-rule: evenodd; }
.base { fill: #fff; } .stem { stroke: #858b95; stroke-width: 12; } .ball { fill: #fff; stroke: #858b95; stroke-width: 5; }
.node { fill: none; stroke: #f9a11b; stroke-width: 4; } .dot { fill: #f9a11b; }
.goog { font: 500 17px Roboto, sans-serif; fill: #fff; stroke: #a5a5a5; stroke-width: 2; paint-order: stroke; }
.fs, .zoom { position: absolute; right: 10px; width: 40px; background: #fff; border-radius: 2px; box-shadow: 0 1px 4px rgba(0,0,0,.25); }
.fs { top: 10px; height: 40px; display: grid; place-items: center; }
.fs path { fill: none; stroke: #666; stroke-width: 3; }
.zoom { top: 616px; height: 81px; padding: 11px 5px; }
.zoom svg { margin: 0 auto; } .zoom path { stroke: #666; stroke-width: 4; }
.zoom hr { margin: 11px 0; border: 0; height: 1px; background: #e6e6e6; }
.attr { position: absolute; right: 0; bottom: 0; display: flex; height: 14px; font: 10px/14px Roboto, sans-serif; color: #000; background: rgba(245,245,245,.72); white-space: nowrap; }
.attr span { padding: 0 6px; }
.ide { display: flex; width: 91px; margin-left: 16px; background: #21252c; border-left: 1px solid #000; flex: none; }
.rail { position: relative; width: 50px; border-right: 1px solid #373a42; }
.chip { position: absolute; left: 5px; top: -10px; width: 38px; height: 35px; border-radius: 7px; background: #43474f; }
.rail svg { position: relative; fill: none; stroke: #ced0d6; stroke-width: 1.600; }
.rail .sep { stroke: #393c44; } .dots { fill: #ced0d6; stroke: none; }
.tree { flex: 1; display: flex; flex-direction: column; overflow: hidden; }
.tree svg { fill: none; stroke: #b4b8bf; stroke-width: 1.500; } .fold { fill: #43454a; }
.thead { height: 33px; padding: 1px 0 0 19px; background: #323843; color: #8aa0c8; font: 15px/13px "Liberation Mono", monospace; }
.row { margin: 225px 0 0 15px; height: 24px; border-radius: 4px 0 0 4px; background: #30343b; }
.bar { margin: 578px 0 0 1px; height: 11px; background: #4b4e52; }
.foot { margin-top: 1px; border-top: 1px solid #373a42; height: 8px; }
</style>
